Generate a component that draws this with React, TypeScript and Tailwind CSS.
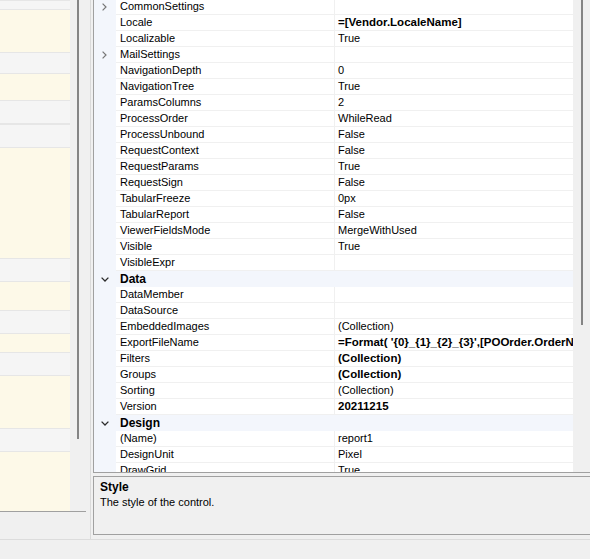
import React from "react";

type Prop = { name: string; value?: string; bold?: boolean; expandable?: boolean };
type Row = { category: string } | Prop;

const rows: Row[] = [
  { name: "CommonSettings", expandable: true },
  { name: "Locale", value: "=[Vendor.LocaleName]", bold: true },
  { name: "Localizable", value: "True" },
  { name: "MailSettings", expandable: true },
  { name: "NavigationDepth", value: "0" },
  { name: "NavigationTree", value: "True" },
  { name: "ParamsColumns", value: "2" },
  { name: "ProcessOrder", value: "WhileRead" },
  { name: "ProcessUnbound", value: "False" },
  { name: "RequestContext", value: "False" },
  { name: "RequestParams", value: "True" },
  { name: "RequestSign", value: "False" },
  { name: "TabularFreeze", value: "0px" },
  { name: "TabularReport", value: "False" },
  { name: "ViewerFieldsMode", value: "MergeWithUsed" },
  { name: "Visible", value: "True" },
  { name: "VisibleExpr" },
  { category: "Data" },
  { name: "DataMember" },
  { name: "DataSource" },
  { name: "EmbeddedImages", value: "(Collection)" },
  { name: "ExportFileName", value: "=Format( '{0}_{1}_{2}_{3}',[POOrder.OrderNbr]", bold: true },
  { name: "Filters", value: "(Collection)", bold: true },
  { name: "Groups", value: "(Collection)", bold: true },
  { name: "Sorting", value: "(Collection)" },
  { name: "Version", value: "20211215", bold: true },
  { category: "Design" },
  { name: "(Name)", value: "report1" },
  { name: "DesignUnit", value: "Pixel" },
  { name: "DrawGrid", value: "True" },
];

// left list bands: height + kind (g = group header, y = cream body)
const bands: [number, "g" | "y"][] = [
  [10, "g"], [42, "y"], [22, "g"], [26, "y"], [24, "g"], [24, "g"], [110, "y"],
  [24, "g"], [28, "y"], [24, "g"], [18, "y"], [24, "g"], [52, "y"], [24, "g"], [59, "y"],
];

const ChevronRight = () => (
  <svg width="5" height="8" viewBox="0 0 5 8" fill="none">
    <path d="M0.6 0.6 L4 4 L0.6 7.4" stroke="#767676" strokeWidth="1.2" />
  </svg>
);

const ChevronDown = () => (
  <svg width="8" height="5" viewBox="0 0 8 5" fill="none">
    <path d="M0.6 0.6 L4 4 L7.4 0.6" stroke="#2b2b2b" strokeWidth="1.3" />
  </svg>
);

function GridRow({ row }: { row: Row }) {
  if ("category" in row) {
    return (
      <div className="flex h-[16px] items-center bg-[#f3f6fc]">
        <div className="flex w-[26px] shrink-0 items-center pl-[7px]">
          <ChevronDown />
        </div>
        <span className="font-bold text-[12px] leading-[15px] text-black">{row.category}</span>
      </div>
    );
  }
  return (
    <div className="flex h-[16px]">
      <div className="flex w-[22px] shrink-0 items-center bg-[#f3f6fc] pl-[8px] pb-[1px]">
        {row.expandable && <ChevronRight />}
      </div>
      <div className="w-[219px] shrink-0 overflow-hidden whitespace-nowrap border-b border-r border-[#f0f0f0] bg-white pl-[4px] leading-[15px]">
        {row.name}
      </div>
      <div
        className={`w-[238px] shrink-0 overflow-hidden whitespace-nowrap border-b border-[#f0f0f0] bg-white pl-[3px] leading-[15px] ${
          row.bold ? "font-bold text-[11.5px]" : ""
        }`}
      >
        {row.value ?? ""}
      </div>
    </div>
  );
}

export default function App() {
  return (
    <div className="flex h-[559px] w-[590px] flex-col overflow-hidden bg-[#f0f0f0] font-['Liberation_Sans',Arial,sans-serif] text-[11px] text-black">
      <div className="flex h-[539px] shrink-0">
        {/* left pane */}
        <div className="flex w-[90px] shrink-0 flex-col">
          <div className="flex h-[512px] w-[86px] border-b border-[#a0a0a0]">
            <div className="flex w-[70px] flex-col">
              {bands.map(([h, k], i) => (
                <div
                  key={i}
                  style={{ height: h }}
                  className={
                    k === "g"
                      ? "shrink-0 border-t border-b border-[#e6e6e6] bg-[#f5f5f5]"
                      : "shrink-0 bg-[#fdf9e8]"
                  }
                />
              ))}
            </div>
            <div className="w-[16px] pl-[7px]">
              <div className="h-[439px] w-[2px] bg-[#858585]" />
            </div>
          </div>
        </div>

        {/* property pane */}
        <div className="flex w-[500px] flex-col border-l border-[#dadada] pl-[2px]">
          <div className="flex h-[473px] shrink-0 border-b border-l border-[#a0a0a0]">
            <div className="w-[479px] overflow-hidden">
              <div className="mt-[-1px]">
                {rows.map((r, i) => (
                  <GridRow key={i} row={r} />
                ))}
              </div>
            </div>
            <div className="w-[17px] pl-[8px]">
              <div className="h-[325px] w-[2px] bg-[#858585]" />
            </div>
          </div>
          <div className="mt-[3px] h-[59px] shrink-0 border-t border-b border-l border-[#a0a0a0] px-[6px] pt-[3px]">
            <div className="font-bold text-[12px] leading-[15px]">Style</div>
            <div className="leading-[15px]">The style of the control.</div>
          </div>
        </div>
      </div>
      <div className="h-[1px] shrink-0 bg-[#dcdcdc]" />
      <div className="flex-1" />
    </div>
  );
}
